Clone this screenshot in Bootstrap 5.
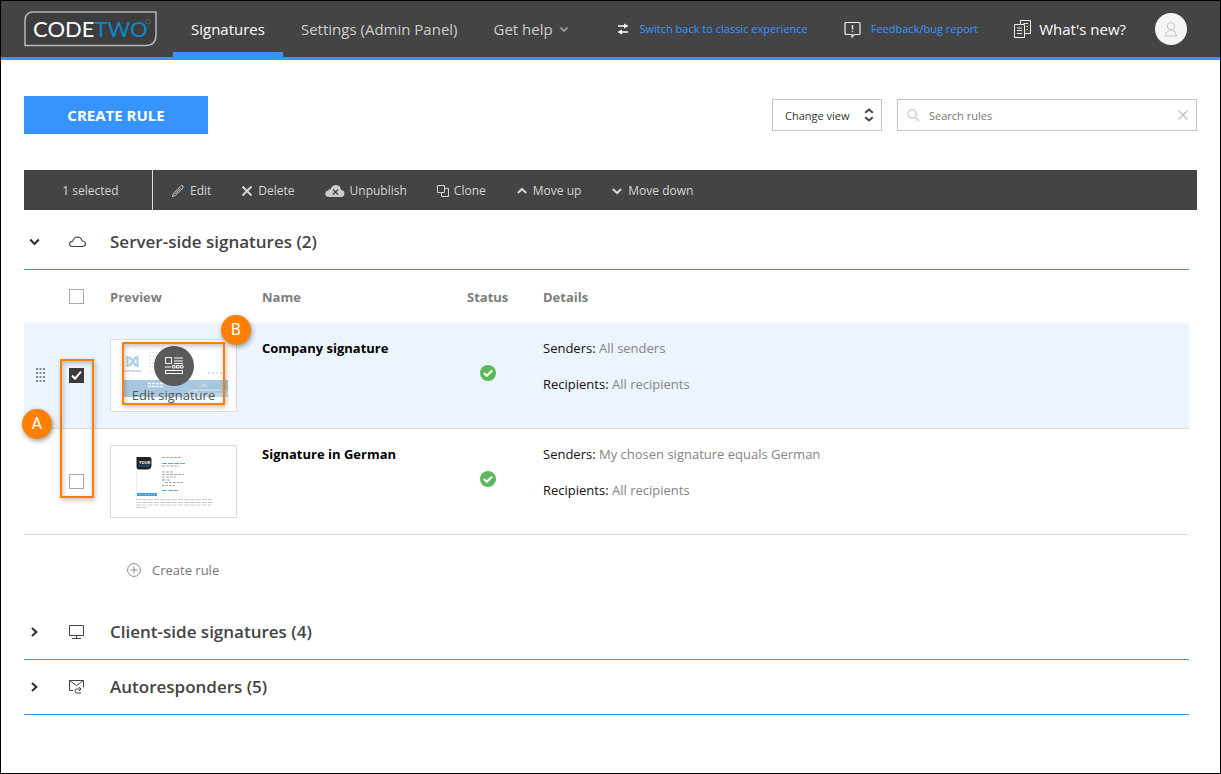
<!DOCTYPE html>
<html lang="en">
<head>
<meta charset="utf-8">
<meta name="viewport" content="width=device-width, initial-scale=1">
<title>CodeTwo Signatures</title>
<link href="https://cdn.jsdelivr.net/npm/bootstrap@5.3.0/dist/css/bootstrap.min.css" rel="stylesheet">
<style>
  :root { --blue: #3794ff; --dark: #444; --orange: #ff8000; }
  body { font-family: "Open Sans", "Noto Sans", sans-serif; font-size: 13px; line-height: 20px; color: #111; border: 1px solid #000; }
  svg { display: block; flex: none; }
  button { line-height: 20px; }

  .topbar { background: var(--dark); border-bottom: 3px solid var(--blue); height: 59px; padding: 0 33px 0 23px; }
  .brand-box { margin-right: 16px; }
  .tab-link { height: 56px; padding: 5px 18px 0; font-size: 15px; color: #ccc; text-decoration: none; border-bottom: 5px solid transparent; gap: 6px; }
  .tab-link.active { color: #fff; border-bottom-color: var(--blue); }
  .side-link { font-size: 11px; color: var(--blue); text-decoration: none; gap: 10px; margin-right: 36px; }
  .news-link { font-size: 15px; color: #fff; text-decoration: none; gap: 8px; margin-right: 29px; }
  .avatar { width: 32px; height: 32px; background: #f5f5f5; border: 0; }

  .page-body { padding: 36px 23px 0; }
  .btn-create { width: 184px; height: 38px; background: var(--blue); color: #fff; border: 0; border-radius: 0; font-size: 15px; font-weight: 700; padding: 0; }
  .btn-create:hover { background: #1f83f5; color: #fff; }
  .tools { gap: 15px; }
  .view-select, .find-input { height: 32px; border: 1px solid #c4c4c4; border-radius: 0; font-size: 11px; background: #fff; color: #333; padding-top: 2px; }
  .view-select { width: 110px; padding-left: 12px; padding-right: 20px; appearance: none; }
  .find-box { width: 300px; }
  .find-input { width: 100%; padding-left: 31px; padding-right: 30px; }
  .find-input::placeholder { color: #777; opacity: 1; }
  .over-icon { position: absolute; top: 0; bottom: 0; margin: auto 0; pointer-events: none; }
  .at-left { left: 10px; }
  .at-right { right: 8px; }
  .clear-btn { border: 0; background: none; padding: 0; height: 12px; pointer-events: auto; }

  .actions { background: var(--dark); height: 40px; margin-top: 36px; padding-top: 1px; font-size: 12px; color: #d4d4d4; }
  .picked { width: 129px; margin-top: -1px; padding: 1px 0 0 5px; border-right: 1px solid #ddd; }
  .action-row { padding-left: 18px; gap: 30px; }
  .action { background: none; border: 0; color: inherit; padding: 0; gap: 5px; }

  .listing { padding: 5px 8px 0 0; }
  .group-head { width: 100%; height: 55px; border: 0; border-bottom: 1px solid var(--blue); background: none; padding: 0; color: #444; }
  .group-head .c1 { width: 45px; padding-left: 5px; }
  .group-head .c2 { width: 41px; }
  .group-head h2 { font-size: 17px; font-weight: 600; line-height: 24px; margin: 0; }

  .rules { width: 100%; table-layout: fixed; border-collapse: separate; border-spacing: 0; }
  .rules th { height: 53px; font-weight: 700; color: #7d7d7d; padding: 0; }
  .rules td { height: 106px; border-bottom: 1px solid #dcdcdc; padding: 0; }
  .rules .picked-row td { background: #ecf4fd; }
  .rules td.words { vertical-align: top; padding-top: 15px; }
  .rules td.state { padding: 0 0 6px 13px; }
  .value { color: #858585; }
  .rule-tick { width: 15px; height: 15px; margin: 0; display: block; border: 1px solid #a8a8a8; border-radius: 0 !important; background-color: #fff; }
  .rule-tick:checked { background-color: #3b3b3b; border-color: #3b3b3b; background-size: 15px 15px;
    background-image: url("data:image/svg+xml,%3csvg xmlns='http://www.w3.org/2000/svg' viewBox='0 0 15 15'%3e%3cpath d='M3 7.5l3 3.200 6-7' fill='none' stroke='white' stroke-width='2'/%3e%3c/svg%3e") !important; }
  .thumb { width: 127px; height: 73px; border: 1px solid #dcdcdc; background: #fff; }
  .edit-sign { position: absolute; inset: 0; background: none; border: 0; padding: 6px 0 0; color: #555; }
  .edit-disc { width: 40px; height: 40px; background: #5a5a5a; }
  .edit-label { line-height: 18px; }

  .mark-box { position: absolute; border: 2px solid var(--orange); box-shadow: 1px 2px 5px rgba(0,0,0,.25), inset 1px 2px 5px rgba(0,0,0,.25); pointer-events: none; z-index: 2; }
  .mark-dot { position: absolute; width: 30px; height: 30px; background: var(--orange); color: #fff; font-family: "DejaVu Sans", sans-serif; font-size: 15px; box-shadow: 1px 2px 5px rgba(0,0,0,.4); z-index: 3; }
  .mark-a { left: 36px; top: 89px; width: 34px; height: 139px; }
  .dot-a { left: -2px; top: 139px; }
  .mark-b { left: 11px; top: 2px; width: 103px; height: 63px; }
  .dot-b { left: 110px; top: -25px; }

  .add-rule { height: 70px; padding: 0 0 0 103px; background: none; border: 0; color: #777; gap: 11px; }
</style>
</head>
<body class="min-vh-100">
<header class="topbar d-flex align-items-center">
  <a href="#" class="brand-box" aria-label="CodeTwo">
    <svg width="133" height="36" viewBox="0 0 133 36">
      <path d="M9.500 1H132V24Q132 34.500 121.500 34.500H1V10Q1 1 9.500 1Z" fill="#3d3d40" stroke="#b5b5b5" stroke-width="1.500"/>
      <text x="9" y="25.500" font-family="Lato, sans-serif" font-size="22" fill="#fff">CODE<tspan fill="#0b88c4">TWO</tspan></text>
      <circle cx="124" cy="10.500" r="2.300" fill="none" stroke="#666" stroke-width=".7"/>
    </svg>
  </a>
  <nav class="d-flex">
    <a href="#" class="tab-link active d-flex align-items-center">Signatures</a>
    <a href="#" class="tab-link d-flex align-items-center">Settings (Admin Panel)</a>
    <a href="#" class="tab-link d-flex align-items-center">Get help
      <svg width="10" height="8" viewBox="0 0 10 8"><path d="M1.500 2.500L5 6l3.500-3.500" fill="none" stroke="#999" stroke-width="1.800"/></svg></a>
  </nav>
  <div class="ms-auto d-flex align-items-center">
    <a href="#" class="side-link d-flex align-items-center">
      <svg width="12" height="12" viewBox="0 0 12 12"><path d="M1 3h7M4 9h7" stroke="#fff" stroke-width="1.300"/><path d="M7 .5L11.500 3 7 5.500zM5 6.500L.5 9 5 11.500z" fill="#fff"/></svg>
      Switch back to classic experience</a>
    <a href="#" class="side-link d-flex align-items-center">
      <svg width="17" height="17" viewBox="0 0 17 17"><path d="M2 1.500h13q1 0 1 1v10q0 1-1 1h-4.500L8 16v-2.500H2q-1 0-1-1v-10q0-1 1-1z" fill="none" stroke="#eee" stroke-width="1.200"/><path d="M8.500 4v4.500M8.500 9.800v1.500" stroke="#ddd" stroke-width="1.500"/></svg>
      Feedback/bug report</a>
    <a href="#" class="news-link d-flex align-items-center">
      <svg width="17" height="19" viewBox="0 0 17 19"><path d="M.5 4.500h10v13H.5zM6.500 4V.5h10v13H11M3 8h5M3 10.500h5M3 13.500h5M9.500 3.500h4.500M12.500 6.500H14M12.500 9.500H14" fill="none" stroke="#eee"/></svg>
      What's new?</a>
    <button class="avatar rounded-circle d-flex align-items-center justify-content-center p-0" aria-label="Account">
      <svg width="14" height="16" viewBox="0 0 14 16"><path d="M7 1.500a3.600 3.600 0 0 1 0 7.400 3.600 3.600 0 0 1 0-7.400zM1.500 15q.3-4.500 4-6h3q3.700 1.500 4 6z" fill="none" stroke="#c4c4c4"/></svg>
    </button>
  </div>
</header>

<main class="page-body">
  <div class="tools d-flex align-items-center">
    <button class="btn btn-create">CREATE RULE</button>
    <div class="ms-auto position-relative">
      <select class="view-select" aria-label="Change view"><option>Change view</option></select>
      <svg class="over-icon at-right" width="10" height="14" viewBox="0 0 10 14"><path d="M1.200 4.800L5 1.500l3.800 3.300M1.200 9.200L5 12.500l3.800-3.300" fill="none" stroke="#444" stroke-width="2"/></svg>
    </div>
    <div class="find-box position-relative">
      <svg class="over-icon at-left" width="13" height="13" viewBox="0 0 13 13"><circle cx="5" cy="5" r="4.200" fill="none" stroke="#ccc" stroke-width="1.400"/><path d="M8 8l4 4" stroke="#ccc" stroke-width="1.600"/></svg>
      <input class="find-input" type="text" placeholder="Search rules" aria-label="Search rules">
      <button class="over-icon at-right clear-btn" aria-label="Clear"><svg width="12" height="12" viewBox="0 0 12 12"><path d="M1.500 1.500l9 9M10.500 1.500l-9 9" stroke="#bbb" stroke-width="1.100"/></svg></button>
    </div>
  </div>

  <div class="actions d-flex">
    <div class="picked d-flex align-items-center justify-content-center">1 selected</div>
    <div class="action-row d-flex align-items-center">
      <button class="action d-flex align-items-center"><svg width="14" height="14" viewBox="0 0 14 14"><path d="M1.500 12.500l1-3.300L9.800 2q1.100-1 2 0t0 2L4.700 11.300zM4 9.800l5.500-5.500" fill="none" stroke="#ccc"/></svg>Edit</button>
      <button class="action d-flex align-items-center"><svg width="12" height="12" viewBox="0 0 12 12"><path d="M1.500 1.500l9 9M10.500 1.500l-9 9" stroke="#d4d4d4" stroke-width="2"/></svg>Delete</button>
      <button class="action d-flex align-items-center"><svg width="20" height="14" viewBox="0 0 20 14"><path d="M4 13q-3.800-.3-3.800-3.300Q.4 7 3 6.500 4 4.700 5.800 5 7 1 11 1q4.500.2 5 5 3.500.4 3.500 3.500-.2 3.200-3.500 3.500z" fill="#ccc"/><path d="M8 5.500l5 5M13 5.500l-5 5" stroke="#444" stroke-width="1.300"/></svg>Unpublish</button>
      <button class="action d-flex align-items-center"><svg width="12" height="12" viewBox="0 0 12 12"><path d="M.5.500h7v7h-7zM7.500 3.500h4v8h-7v-4" fill="none" stroke="#d4d4d4"/></svg>Clone</button>
      <button class="action d-flex align-items-center"><svg width="12" height="10" viewBox="0 0 12 10"><path d="M1.800 7L6 3l4.200 4" fill="none" stroke="#d4d4d4" stroke-width="2"/></svg>Move up</button>
      <button class="action d-flex align-items-center"><svg width="12" height="10" viewBox="0 0 12 10"><path d="M1.800 3L6 7l4.200-4" fill="none" stroke="#d4d4d4" stroke-width="2"/></svg>Move down</button>
    </div>
  </div>

  <div class="listing">
    <button class="group-head d-flex align-items-center text-start" aria-expanded="true">
      <span class="c1"><svg width="11" height="10" viewBox="0 0 11 10"><path d="M1.200 2.500L5.500 7l4.300-4.500" fill="none" stroke="#333" stroke-width="2.200"/></svg></span>
      <span class="c2"><svg width="17" height="12" viewBox="0 0 17 12"><path d="M3.500 10.500Q.6 10.300.6 8q.2-2.500 2.900-2.600Q5 1 8.500 1q3.700.2 4.500 4 3.300.1 3.500 2.800-.2 2.500-3 2.700z" fill="none" stroke="#444" stroke-width="1.100"/></svg></span>
      <h2>Server-side signatures (2)</h2>
    </button>
    <div class="position-relative">
      <table class="rules">
        <colgroup><col style="width:45px"><col style="width:41px"><col style="width:152px"><col style="width:205px"><col style="width:76px"><col></colgroup>
        <thead>
          <tr><th></th><th><input class="form-check-input rule-tick" type="checkbox" aria-label="Select all rules"></th><th>Preview</th><th>Name</th><th>Status</th><th>Details</th></tr>
        </thead>
        <tbody>
          <tr class="picked-row">
            <td class="ps-2"><svg class="ms-1" width="9" height="15" viewBox="0 0 9 15"><path d="M1 0v15M4.500 0v15M8 0v15" stroke="#888" stroke-width="2" stroke-dasharray="2 2"/></svg></td>
            <td><input class="form-check-input rule-tick" type="checkbox" checked aria-label="Select Company signature"></td>
            <td>
              <div class="thumb position-relative">
                <svg width="125" height="71" viewBox="0 0 125 71">
                  <g fill="none" stroke="#a9d0ea" stroke-width="2.200"><path d="M16.500 16v11M18.500 17l6.500 9M25 17l-6.500 9M26.500 16v11"/></g>
                  <text x="13" y="32" font-size="4" fill="#999">company</text>
                  <path d="M38 13h12M38 16h11M38 20h7M38 23h9M38 27h8M38 32h7" stroke="#d8d8d8" stroke-dasharray="2 1"/>
                  <path d="M97 33h20" stroke="#d3e5f2" stroke-width="2" stroke-dasharray="2 2"/>
                  <rect x="11" y="40" width="106" height="17" fill="#a7c8df"/>
                  <path d="M73 57l8-9 9-2 4-3 3 4 20 4v6z" fill="#c2d8e8"/><path d="M80 48h26M86 52h28" stroke="#8fb5cf"/>
                  <path d="M37 43.500h19M37 46.500h15" stroke="#fff" stroke-width="1.500" stroke-dasharray="3 1"/>
                </svg>
                <button class="edit-sign w-100 d-flex flex-column align-items-center justify-content-start">
                  <span class="edit-disc rounded-circle d-flex align-items-center justify-content-center"><svg width="20" height="20" viewBox="0 0 20 20"><path d="M1.500 1.500h6v6h-6zM8.500 9.500H11V12H8.500zM12.500 9.500H15V12h-2.500zM16.500 9.500H19V12h-2.500zM1.500 14.500h17v3h-17z" fill="none" stroke="#fff"/><path d="M10 2h9M10 5h9M10 7.500h9M1 11h6" stroke="#fff"/></svg></span>
                  <span class="edit-label">Edit signature</span>
                </button>
                <div class="mark-box mark-b"></div>
                <div class="mark-dot dot-b rounded-circle d-flex align-items-center justify-content-center">B</div>
              </div>
            </td>
            <td class="words fw-bold text-black">Company signature</td>
            <td class="state"><svg width="16" height="16" viewBox="0 0 16 16"><circle cx="8" cy="8" r="8" fill="#5cb85c"/><path d="M3.800 8l3 2.800 5.400-5.300" fill="none" stroke="#fff" stroke-width="2"/></svg></td>
            <td class="words"><div>Senders: <span class="value">All senders</span></div><div class="mt-3">Recipients: <span class="value">All recipients</span></div></td>
          </tr>
          <tr>
            <td></td>
            <td><input class="form-check-input rule-tick" type="checkbox" aria-label="Select Signature in German"></td>
            <td>
              <div class="thumb">
                <svg width="125" height="71" viewBox="0 0 125 71">
                  <path d="M25.500 11H38q2.500 0 2.500 2.500V19q0 4.500-4.500 4.500H28q-2.500 0-2.500-2.500z" fill="#222"/>
                  <text x="28" y="17.500" font-size="4" font-weight="700" fill="#fff">YOUR</text><text x="28" y="21" font-size="4" fill="#2a8fd0">LOGO</text>
                  <path d="M25.500 24v29" stroke="#eee"/>
                  <g stroke="#aaa" stroke-dasharray="3 1"><path d="M51 11.500h19M51 20h17M51 26h12M51 28.500h22M51 31h14M52 34h8M54 36.500h18M54 39.500h10"/></g>
                  <path d="M51 17.500h24M51 34h2M51 39.500h2M51 44.500h16" stroke="#55aee0" stroke-dasharray="5 1"/>
                  <rect x="26" y="47" width="20" height="3" fill="#3ba3dc"/><path d="M28 48.500h17" stroke="#9fd2ef" stroke-dasharray="1 2"/>
                  <path d="M25 53.500h76M25 56.500h77M25 59h75M25 61.500h10" stroke="#ccc" stroke-dasharray="5 1"/>
                </svg>
              </div>
            </td>
            <td class="words fw-bold text-black">Signature in German</td>
            <td class="state"><svg width="16" height="16" viewBox="0 0 16 16"><circle cx="8" cy="8" r="8" fill="#5cb85c"/><path d="M3.800 8l3 2.800 5.400-5.300" fill="none" stroke="#fff" stroke-width="2"/></svg></td>
            <td class="words"><div>Senders: <span class="value">My chosen signature equals German</span></div><div class="mt-3">Recipients: <span class="value">All recipients</span></div></td>
          </tr>
        </tbody>
      </table>
      <div class="mark-box mark-a"></div>
      <div class="mark-dot dot-a rounded-circle d-flex align-items-center justify-content-center">A</div>
    </div>
    <button class="add-rule d-flex align-items-center"><svg width="14" height="14" viewBox="0 0 14 14"><circle cx="7" cy="7" r="6.400" fill="none" stroke="#888"/><path d="M7 3.500v7M3.500 7h7" stroke="#888"/></svg>Create rule</button>
    <button class="group-head d-flex align-items-center text-start" aria-expanded="false">
      <span class="c1"><svg width="11" height="10" viewBox="0 0 11 10"><path d="M3 1l4.300 4L3 9" fill="none" stroke="#333" stroke-width="2.200"/></svg></span>
      <span class="c2"><svg width="16" height="14" viewBox="0 0 16 14"><path d="M.5.500h14v10H.5zM7.500 10.500v3M3 13.500h9" fill="none" stroke="#444"/></svg></span>
      <h2>Client-side signatures (4)</h2>
    </button>
    <button class="group-head d-flex align-items-center text-start" aria-expanded="false">
      <span class="c1"><svg width="11" height="10" viewBox="0 0 11 10"><path d="M3 1l4.300 4L3 9" fill="none" stroke="#333" stroke-width="2.200"/></svg></span>
      <span class="c2"><svg width="16" height="14" viewBox="0 0 16 14"><path d="M4 10.500H.5V.5h14v7M.5.500l7 5 7-5M12 13H7.500Q6 13 6 11t1.500-2H12M10 7l2 2-2 2" fill="none" stroke="#444"/></svg></span>
      <h2>Autoresponders (5)</h2>
    </button>
  </div>
</main>
<script src="https://cdn.jsdelivr.net/npm/bootstrap@5.3.0/dist/js/bootstrap.bundle.min.js"></script>
</body>
</html>
